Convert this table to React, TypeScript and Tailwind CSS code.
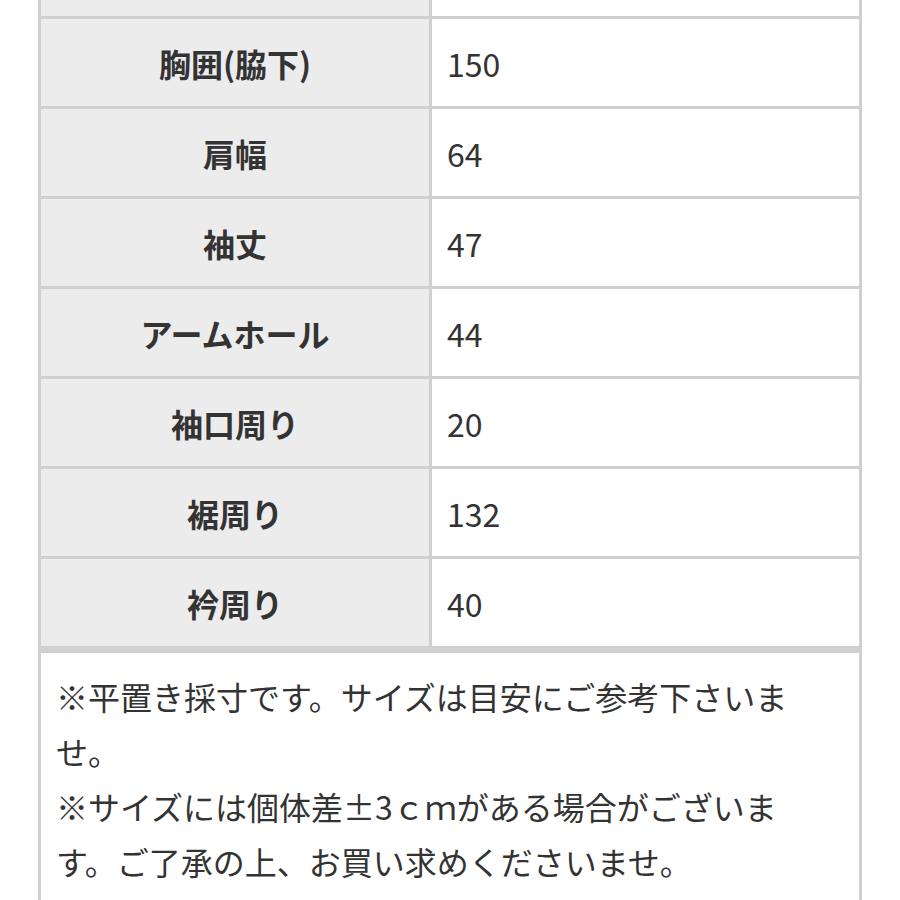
import React from "react";

const rows: [string, string][] = [
  ["胸囲(脇下)", "150"],
  ["肩幅", "64"],
  ["袖丈", "47"],
  ["アームホール", "44"],
  ["袖口周り", "20"],
  ["裾周り", "132"],
  ["衿周り", "40"],
];

export default function App() {
  return (
    <div
      className="w-[900px] h-[900px] overflow-hidden bg-white text-[#333333]"
      style={{ fontFamily: '"Noto Sans CJK JP", "Noto Sans", sans-serif' }}
    >
      <div className="ml-[38px] w-[824px] border-x-[3px] border-[#d0d0d0]">
        <div className="flex h-[19px] border-b-[3px] border-[#d0d0d0]">
          <div className="w-[391px] bg-[#ececec] border-r-[3px] border-[#d0d0d0]" />
          <div className="flex-1 bg-white" />
        </div>
        {rows.map(([label, value], i) => (
          <div
            key={label}
            className={
              i === rows.length - 1
                ? "flex h-[94px] border-b-[7px] border-[#d0d0d0]"
                : "flex h-[90px] border-b-[3px] border-[#d0d0d0]"
            }
          >
            <div className="w-[391px] bg-[#ececec] border-r-[3px] border-[#d0d0d0] flex items-center justify-center text-[32px] font-bold leading-none">
              {label}
            </div>
            <div className="flex-1 bg-white flex items-center pl-[15px] text-[32px] leading-none">
              {value}
            </div>
          </div>
        ))}
        <div className="bg-white pl-[15px] pr-[53px] pt-[16px] pb-[20px] text-[32px] leading-[55px]">
          <p>※平置き採寸です。サイズは目安にご参考下さいませ。</p>
          <p>※サイズには個体差±3ｃｍがある場合がございます。ご了承の上、お買い求めくださいませ。</p>
        </div>
      </div>
    </div>
  );
}
